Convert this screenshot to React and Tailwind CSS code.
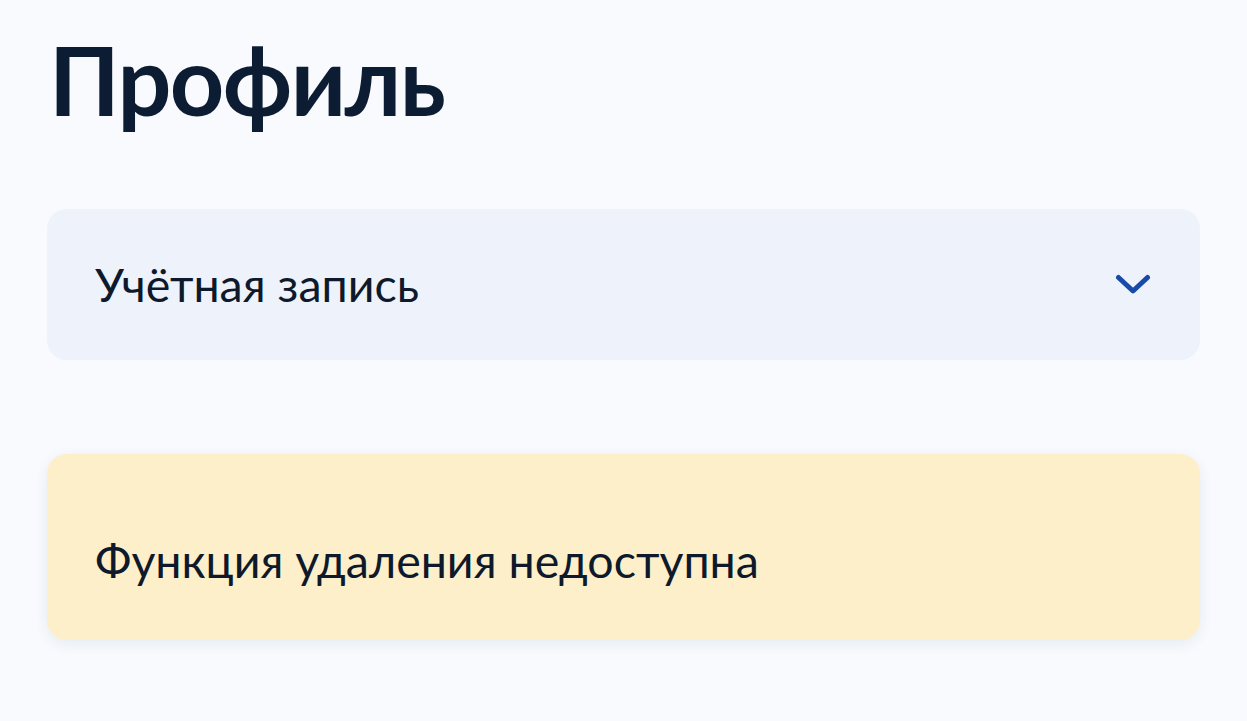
import React from "react";

export default function App() {
  return (
    <div
      className="min-h-[721px] w-full bg-[#f8fafd] px-[47px] pt-[32px] text-[#0c1b30]"
      style={{ fontFamily: "Lato, 'Noto Sans', sans-serif" }}
    >
      <h1 className="pl-[2px] text-[95px] font-bold leading-none tracking-[-1.6px] text-[#0b1c33]">
        Профиль
      </h1>
      <div className="mt-[82px] flex h-[151px] items-center justify-between rounded-[20px] bg-[#eef2fb] pl-[48px] pr-[48px]">
        <span className="text-[46.5px] leading-[1.2] text-[#0e1a2b]">Учётная запись</span>
        <svg width="36" height="24" viewBox="0 0 36 24" fill="none" className="mr-[1px]">
          <path
            d="M3.5 4.5 L18 18 L32.5 4.5"
            stroke="#1a4aa8"
            strokeWidth="5"
            strokeLinecap="round"
            strokeLinejoin="round"
          />
        </svg>
      </div>
      <div className="mt-[94px] h-[186px] rounded-[20px] bg-[#fdefc9] pl-[48px] pt-[79px] shadow-[0_4px_14px_rgba(30,50,90,0.08)]">
        <span className="text-[46.5px] leading-[1.2] text-[#0e1a2b]">Функция удаления недоступна</span>
      </div>
    </div>
  );
}
